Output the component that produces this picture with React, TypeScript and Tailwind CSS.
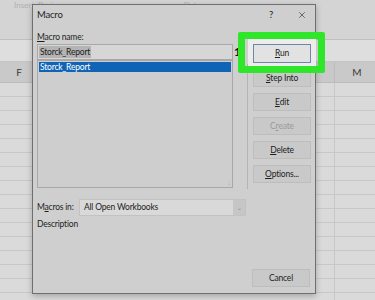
import { X } from 'lucide-react';

const font = { fontFamily: 'Lato, "Noto Sans", sans-serif' };

function DlgButton({ children, muted }: { children: React.ReactNode; muted?: boolean }) {
  return (
    <div
      className={`flex h-[18px] w-[58px] items-center justify-center border border-[#bdbdbd] bg-[#c9c9c9] text-[8.5px] tracking-[-0.2px] ${
        muted ? 'text-[#9a9a9a]' : 'text-[#1e1e1e]'
      }`}
    >
      {children}
    </div>
  );
}

export default function App() {
  const rows = Array.from({ length: 16 });

  return (
    <div className="relative h-[300px] w-[375px] overflow-hidden bg-[#dadada]" style={font}>
      {/* spreadsheet behind the dialog */}
      <div className="flex h-[40px] items-start border-b border-[#bfbfbf] bg-[#d4d4d4] pl-[14px] pt-[1px] text-[8px] leading-[9px] text-[#b0b0b0]">
        <span>Insert &nbsp;Review</span>
        <span className="ml-[120px]">Data</span>
      </div>
      <div className="h-[22px] border-b border-[#c4c4c4] bg-[#dedede]" />
      <div className="flex h-[21px] items-center border-b border-[#bcbcbc] bg-[#c9c9c9] text-[10px] text-[#3a3a3a]">
        <span className="w-[38px] text-center">F</span>
        <div className="flex-1" />
        <div className="h-full w-px bg-[#bcbcbc]" />
        <span className="w-[40px] pl-[4px] text-center">M</span>
      </div>
      <div className="relative">
        {rows.map((_, i) => (
          <div key={i} className="flex h-[14px] border-b border-[#c8c8c8]">
            <div className="w-[334px]" />
            <div className="h-full w-px bg-[#c8c8c8]" />
          </div>
        ))}
      </div>

      {/* Macro dialog */}
      <div className="absolute left-[32px] top-[4px] flex h-[290px] w-[284px] flex-col border border-[#6f6f6f] bg-[#cfcfcf] text-[#1e1e1e] shadow-[0_2px_6px_rgba(0,0,0,0.25)]">
        <div className="flex h-[20px] items-center pl-[4px] pr-[8px] text-[9.5px] tracking-[-0.2px]">
          <span>Macro</span>
          <span className="ml-auto mr-[24px]">?</span>
          <X className="h-[10px] w-[10px]" strokeWidth={1.4} />
        </div>

        <div className="flex px-[4px] text-[8.5px] tracking-[-0.2px]">
          <div className="flex w-[207px] flex-col">
            <div className="mt-[6px] h-[12px] leading-[12px]">
              <u className="underline-offset-1">M</u>acro name:
            </div>
            <div className="mt-[1px] flex h-[16px] items-center">
              <div className="flex h-full w-[196px] items-center border border-[#a8a8a8] bg-[#d6d6d6] pl-[1px]">
                <span className="bg-[#b4b4b4] px-[1px] leading-[12px]">Storck_Report</span>
              </div>
              <span className="ml-[1px] text-[12px] font-bold leading-[14px] text-[#111]">1</span>
            </div>
            <div className="relative flex h-[128px] w-[196px] flex-col border border-[#a8a8a8] bg-[#cecece] pt-[1px]">
              <div className="mx-[1px] flex h-[10px] items-center bg-[#1064b6] pl-[1px] text-white">
                Storck_Report
              </div>
              <span className="absolute bottom-[1px] right-[2px] text-[6px] leading-[6px] text-[#999]">⁝</span>
            </div>
          </div>
          <div className="ml-[6px] mt-[39px] h-[125px] w-px bg-[#b4b4b4]" />
          <div className="ml-[6px] flex flex-col gap-[6px] pt-[19px]">
            <div className="flex h-[19px] w-[58px] items-center justify-center border border-[#6f86a6] bg-[#e2e2e2] shadow-[0_0_0_5px_#ececec]">
              <u className="underline-offset-1">R</u>un
            </div>
            <DlgButton>
              <u className="underline-offset-1">S</u>tep Into
            </DlgButton>
            <DlgButton>
              <u className="underline-offset-1">E</u>dit
            </DlgButton>
            <DlgButton muted>
              C<u className="underline-offset-1">r</u>eate
            </DlgButton>
            <DlgButton>
              <u className="underline-offset-1">D</u>elete
            </DlgButton>
            <DlgButton>
              <u className="underline-offset-1">O</u>ptions...
            </DlgButton>
          </div>
        </div>

        <div className="mt-[10px] flex h-[17px] items-center px-[4px] text-[8.5px] tracking-[-0.2px]">
          <span className="w-[42px] whitespace-nowrap">
            M<u className="underline-offset-1">a</u>cros in:
          </span>
          <div className="flex h-full w-[167px] items-center border border-[#c2c2c2] bg-[#d9d9d9] pl-[4px]">
            <span>All Open Workbooks</span>
            <div className="ml-auto flex h-full w-[12px] items-center justify-center bg-[#c6c6c6] text-[6px] text-[#8a8a8a]">
              ⌄
            </div>
          </div>
        </div>
        <div className="mt-[2px] h-[12px] px-[4px] text-[8.5px] leading-[12px] tracking-[-0.2px]">Description</div>

        <div className="mt-auto mb-[6px] flex justify-end pr-[5px]">
          <DlgButton>Cancel</DlgButton>
        </div>
      </div>

      {/* green highlight */}
      <div className="pointer-events-none absolute left-[238px] top-[32px] h-[41px] w-[87px] rounded-[2px] border-[7px] border-[#2fe62a]" />
    </div>
  );
}
